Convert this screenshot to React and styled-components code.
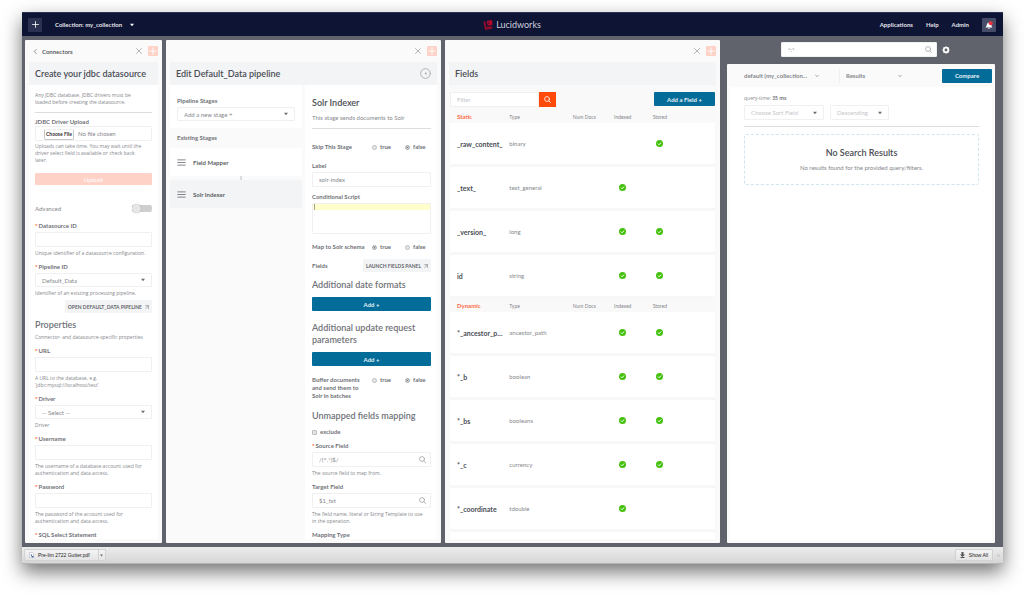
import React, { useId } from "react";
import styled, { createGlobalStyle, css } from "styled-components";

const c = {
  navy: "#0d1434",
  slate: "#60636c",
  panel: "#fafafa",
  band: "#f3f4f6",
  line: "#f0f0f1",
  text: "#5c5f66",
  label: "#707278",
  dark: "#4a4d54",
  mute: "#85878c",
  faint: "#c4c5c8",
  blue: "#036c99",
  orange: "#ff4a0a",
  peach: "#ffd2c7",
  green: "#45c10d",
};

const GlobalStyle = createGlobalStyle`
  *, *::before, *::after { box-sizing: border-box; }
  body { margin: 0; background: #fff; }
  body, button, input, select, textarea {
    font-family: Lato, "Liberation Sans", sans-serif;
    font-size: 6px;
    color: ${c.text};
  }
  button { border: 0; padding: 0; cursor: pointer; }
  h1, h2, h3, p { margin: 0; }
`;

const Page = styled.div`
  height: 100vh;
  padding: 12px 21px 31px 22px;
  display: flex;
`;
const Window = styled.div`
  flex: 1;
  min-width: 0;
  display: flex;
  flex-direction: column;
  background: ${c.slate};
  box-shadow: 0 8px 18px rgba(0, 0, 0, 0.55);
`;

/* Top navigation */
const TopBar = styled.header`
  display: grid;
  grid-template-columns: 1fr auto 1fr;
  align-items: center;
  height: 24px;
  padding: 0 7px 0 6px;
  background: ${c.navy};
  border-top: 1px solid #2b3152;
`;
const TopGroup = styled.div`
  display: flex;
  align-items: center;
  gap: ${(p) => p.$gap}px;
  justify-content: ${(p) => (p.$end ? "flex-end" : "flex-start")};
`;
const SquareButton = styled.button`
  display: grid;
  place-items: center;
  width: 14px;
  height: 14px;
  border-radius: 1px;
  background: ${(p) => (p.$light ? "#474c68" : "#2b3150")};
  color: #fff;
`;
const CollectionButton = styled.button`
  display: flex;
  align-items: center;
  gap: 8px;
  background: none;
  color: #e3e4ea;
  font-weight: 700;
`;
const NavLink = styled.a`
  color: #e3e4ea;
  font-weight: 700;
  text-decoration: none;
`;
const Brand = styled.div`
  display: flex;
  align-items: center;
  gap: 3px;
  color: #cfd1dc;
  font-size: 9px;
`;

/* Work area */
const Workspace = styled.main`
  flex: 1;
  min-height: 0;
  display: grid;
  grid-template-columns: minmax(0, 137fr) minmax(0, 275fr) minmax(0, 275fr) minmax(0, 271fr);
  grid-template-rows: minmax(0, 1fr);
  gap: 4px;
  padding: 4px 8px 4px 3px;
`;
const Panel = styled.section`
  min-width: 0;
  display: flex;
  flex-direction: column;
  padding: 0 4px 4px;
  background: ${c.panel};
  border-radius: 1px;
`;
const PanelTop = styled.div`
  display: flex;
  align-items: center;
  justify-content: flex-end;
  gap: 6px;
  height: 22px;
  flex: none;
`;
const BackButton = styled.button`
  display: flex;
  align-items: center;
  gap: 4px;
  margin-right: auto;
  padding-left: 4px;
  background: none;
  font-weight: 700;
`;
const IconButton = styled.button`
  display: grid;
  place-items: center;
  background: none;
  color: #a2a4a9;
`;
const AddPanelButton = styled(IconButton)`
  width: 10px;
  height: 10px;
  background: ${c.peach};
  border-radius: 1px;
  color: #fff;
`;
const TitleBand = styled.div`
  display: flex;
  align-items: center;
  justify-content: space-between;
  height: 23px;
  flex: none;
  padding: 0 6px;
  background: ${c.band};
`;
const Title = styled.h2`
  font-size: 9px;
  line-height: 12px;
  font-weight: 600;
  color: ${c.dark};
  white-space: nowrap;
`;
const Scroll = styled.div`
  flex: 1;
  min-height: 0;
  min-width: 0;
  overflow: hidden;
  padding: ${(p) => p.$pad || "0"};
  background: ${(p) => p.$bg || "#fff"};
`;
const Columns = styled.div`
  flex: 1;
  min-height: 0;
  display: grid;
  grid-template-columns: 1fr 1fr;
  gap: 3px;
`;

/* Form parts */
const Stack = styled.div`
  display: flex;
  flex-direction: column;
  margin-top: ${(p) => p.$top || 0}px;
`;
const Help = styled.p`
  font-family: "Open Sans", "Liberation Sans", sans-serif;
  font-size: 5px;
  line-height: 7px;
  color: ${c.mute};
`;
const Note = styled.p`
  font-size: 6px;
  line-height: 8px;
  color: ${c.mute};
`;
const Rule = styled.hr`
  width: 100%;
  height: 1px;
  margin: ${(p) => p.$m};
  border: 0;
  background: #dcdde0;
`;
const Label = styled.label`
  display: block;
  font-size: 6px;
  line-height: ${(p) => p.$lh || 10}px;
  font-weight: 700;
  color: ${c.label};
`;
const Star = styled.span`
  color: ${c.orange};
  margin-right: 1px;
`;
const boxed = css`
  width: 100%;
  border: 1px solid ${c.line};
  border-radius: 1px;
  background: #fff;
  color: ${c.mute};
  outline: none;
`;
const TextInput = styled.input`
  ${boxed}
  height: 15px;
  padding: 0 6px;
  margin: 0;
  &::placeholder { color: ${c.faint}; }
`;
const FileInput = styled.input`
  ${boxed}
  height: 15px;
  line-height: 11px;
  padding: 1px 0 1px 8px;
  color: ${c.mute};
  &::file-selector-button {
    height: 11px;
    margin: 0 4px 0 0;
    padding: 0 1px;
    border: 1px solid #c6c7ca;
    border-top-color: #eee;
    border-radius: 2px;
    background: #fff;
    color: #333;
    font-family: inherit;
    font-size: 5px;
    font-weight: 700;
  }
`;
const SelectWrap = styled.div`
  position: relative;
  width: ${(p) => (p.$w ? p.$w + "px" : "100%")};
  svg {
    position: absolute;
    right: ${(p) => p.$arrow || 7}px;
    top: 50%;
    transform: translateY(-50%);
    pointer-events: none;
  }
`;
const NativeSelect = styled.select`
  ${boxed}
  display: block;
  appearance: none;
  height: ${(p) => p.$h || 14}px;
  padding: 0 6px;
  color: ${(p) => (p.$faint ? c.faint : c.mute)};
  ${(p) =>
    p.$plain &&
    css`
      border: 0;
      padding: 0;
      background: none;
      font-weight: 700;
      color: ${c.mute};
    `}
`;
const SearchWrap = styled.div`
  position: relative;
  flex: 1;
  svg {
    position: absolute;
    right: 5px;
    top: 4px;
    color: #a2a4a9;
  }
`;
const WideButton = styled.button`
  height: ${(p) => p.$h || 14}px;
  width: ${(p) => (p.$w ? p.$w + "px" : "100%")};
  flex: none;
  border-radius: 1px;
  background: ${(p) => (p.$soft ? c.peach : c.blue)};
  color: ${(p) => (p.$soft ? "#fff" : "#e6f1f5")};
  font-weight: ${(p) => (p.$soft ? 400 : 700)};
`;
const GrayButton = styled.button`
  display: flex;
  align-items: center;
  gap: 3px;
  height: 13px;
  padding: 0 3px;
  background: ${c.band};
  border-radius: 1px;
  color: #63656b;
  font-size: 5px;
  font-weight: 700;
  text-transform: uppercase;
  white-space: nowrap;
`;
const Row = styled.div`
  display: flex;
  align-items: center;
  justify-content: ${(p) => p.$justify || "space-between"};
  gap: ${(p) => p.$gap || 0}px;
  margin-top: ${(p) => p.$top || 0}px;
`;
const SubTitle = styled.h3`
  font-size: 9px;
  line-height: 12px;
  font-weight: 600;
  color: ${(p) => (p.$dark ? c.dark : c.label)};
  margin-top: ${(p) => p.$top || 0}px;
`;
const Toggle = styled.input`
  appearance: none;
  position: relative;
  width: 20px;
  height: 9px;
  margin: 0;
  background: linear-gradient(#cfcfcf, #cfcfcf) center / 100% 7px no-repeat;
  border-radius: 4px;
  &::before {
    content: "";
    position: absolute;
    left: 0;
    top: 0;
    width: 9px;
    height: 9px;
    border-radius: 50%;
    background: #e6e6e6;
    box-shadow: 0 0 1px rgba(0, 0, 0, 0.4);
  }
`;
const RadioRow = styled.fieldset`
  display: grid;
  grid-template-columns: 60px 33px 1fr;
  align-items: start;
  border: 0;
  padding: 0;
  margin: ${(p) => p.$top}px 0 0;
`;
const RadioName = styled.span`
  font-size: 6px;
  line-height: 8px;
  font-weight: 700;
  color: ${c.label};
`;
const Choice = styled.label`
  display: flex;
  align-items: center;
  gap: 3px;
  line-height: 8px;
  font-weight: 700;
  color: ${c.label};
`;
const Radio = styled.input`
  appearance: none;
  width: 5px;
  height: 5px;
  margin: 0;
  border: 1px solid #bcbdc0;
  border-radius: 50%;
  background: #e6e6e8;
  &:checked {
    background: #4d4f54;
    box-shadow: inset 0 0 0 1px #ddd;
  }
`;
const Check = styled(Radio)`
  border-radius: 1px;
`;
const Script = styled.textarea`
  ${boxed}
  display: block;
  height: 31px;
  padding: 0 1px;
  resize: none;
  background: linear-gradient(#ffffcc, #ffffcc) top / 100% 6px no-repeat #fff;
`;
const ScriptBox = styled.div`
  position: relative;
  &::after {
    content: "";
    position: absolute;
    left: 2px;
    top: 1px;
    width: 1px;
    height: 6px;
    background: #a5a698;
  }
`;

/* Pipeline stages */
const StageForm = styled.div`
  padding: 11px 7px 7px 7px;
  background: #fff;
`;
const StageHeading = styled.h3`
  padding-left: 7px;
  font-size: 6px;
  line-height: 20px;
  font-weight: 700;
  color: ${c.label};
`;
const Stage = styled.button`
  display: flex;
  align-items: center;
  gap: 7px;
  width: 100%;
  height: 28px;
  padding-left: 7px;
  background: ${(p) => (p.$active ? c.band : "#fff")};
  font-weight: 700;
`;
const StageLink = styled.div`
  display: grid;
  place-items: center;
  height: 4px;
  padding-left: 9px;
  color: #a2a4a9;
`;

/* Fields */
const Toolbar = styled.div`
  display: flex;
  justify-content: space-between;
  height: 15px;
`;
const FilterGroup = styled.form`
  display: flex;
  width: 40%;
`;
const SearchButton = styled.button`
  display: grid;
  place-items: center;
  width: 17px;
  flex: none;
  background: ${c.orange};
  color: #fff;
`;
const Table = styled.table`
  width: 100%;
  table-layout: fixed;
  border-collapse: separate;
  border-spacing: 0;
`;
const Th = styled.th`
  height: 13px;
  padding: 0 0 0 ${(p) => (p.$first ? 7 : 1)}px;
  font-size: ${(p) => (p.$first ? 6 : 5)}px;
  line-height: 8px;
  font-weight: ${(p) => (p.$first ? 700 : 400)};
  color: ${(p) => (p.$first ? "#ff6a45" : c.mute)};
  text-align: ${(p) => (p.$center ? "center" : "left")};
`;
const Td = styled.td`
  height: 44px;
  padding: 0 0 0 ${(p) => (p.$name ? 7 : 1)}px;
  border-bottom: 3px solid #f7f7f8;
  background: #fff;
  font-size: ${(p) => (p.$name ? 7 : 6)}px;
  line-height: 8px;
  font-weight: ${(p) => (p.$name ? 700 : 400)};
  color: ${(p) => (p.$name ? c.dark : c.mute)};
  text-align: ${(p) => (p.$center ? "center" : "left")};
  white-space: nowrap;
  svg { display: block; margin: 0 auto; }
`;

/* Search */
const SearchSide = styled.div`
  min-width: 0;
  display: flex;
  flex-direction: column;
  margin-left: 3px;
`;
const QueryBar = styled.form`
  display: flex;
  align-items: center;
  gap: 5px;
  width: 63%;
  margin: 2px 0 7px 54px;
`;
const ResultPanel = styled(Panel)`
  flex: 1;
  padding: 0 3px 3px;
`;
const ResultHead = styled.div`
  display: flex;
  align-items: center;
  justify-content: space-between;
  height: 23px;
  padding-left: 14px;
`;
const Divider = styled.span`
  width: 1px;
  height: 16px;
  margin: 0 6px 0 17px;
  background: ${c.line};
`;
const Empty = styled.div`
  display: flex;
  flex-direction: column;
  align-items: center;
  gap: 5px;
  margin-top: 7px;
  padding: 12px 0;
  border: 1px dashed #cfe6ee;
  border-radius: 2px;
`;

/* Downloads */
const Downloads = styled.footer`
  display: flex;
  align-items: center;
  gap: 4px;
  height: 17px;
  padding: 0 3px 0 2px;
  background: linear-gradient(#ececec, #d6d6d6);
  border-bottom: 1px solid #b4b4b4;
`;
const DownloadItem = styled.button`
  display: flex;
  align-items: center;
  gap: 4px;
  height: 12px;
  padding: 0 ${(p) => (p.$push ? 4 : 2)}px 0 4px;
  border: 1px solid #d2d2d2;
  border-radius: 1px;
  background: linear-gradient(#f4f4f4, #e4e4e4);
  color: #222;
  font-family: "Liberation Sans", sans-serif;
  font-size: 5px;
  margin-left: ${(p) => (p.$push ? "auto" : 0)};
`;
const FileArrow = styled.span`
  display: flex;
  align-items: center;
  height: 10px;
  margin-left: 4px;
  padding-left: 1px;
  border-left: 1px solid #cfcfcf;
`;

const Caret = ({ size = 4, color = "#6a6c72" }) => (
  <svg width={size} height={size} viewBox="0 0 10 10" aria-hidden="true">
    <path d="M0 2h10L5 8z" fill={color} />
  </svg>
);
const Stroke = ({ size, d, w = 1, children }) => (
  <svg width={size} height={size} viewBox="0 0 12 12" fill="none" stroke="currentColor" strokeWidth={w} strokeLinecap="round" aria-hidden="true">
    {d && <path d={d} />}
    {children}
  </svg>
);
const Plus = ({ size = 8, w = 1.4 }) => <Stroke size={size} w={w} d="M6 1v10M1 6h10" />;
const Cross = ({ size = 6 }) => <Stroke size={size} w={1.6} d="M1 1l10 10M11 1L1 11" />;
const Lens = ({ size = 7, w = 1.4 }) => (
  <Stroke size={size} w={w} d="M8.4 8.4L11.3 11.3">
    <circle cx="5.2" cy="5.2" r="4.2" />
  </Stroke>
);
const Launch = () => <Stroke size={4} w={1.6} d="M2 2h9v9M10 3L2 11" />;
const Bars = () => <Stroke size={9} w={1} d="M1 2.5h10M1 6h10M1 9.5h10" />;
const Chevron = () => <Stroke size={4} w={1.6} d="M2 4l4 4 4-4" />;
const Tick = () => (
  <svg width="7" height="7" viewBox="0 0 14 14" role="img" aria-label="yes">
    <circle cx="7" cy="7" r="7" fill={c.green} />
    <path d="M3.8 7.2l2.3 2.3 4.2-4.4" fill="none" stroke="#fff" strokeWidth="2" />
  </svg>
);
const Logo = () => (
  <svg width="10" height="10" viewBox="0 0 30 30" aria-hidden="true">
    <path d="M1 5l6-1 3 17 17-3 1 8-22 4z" fill="#8d0a2b" />
    <path d="M11 3l16-3 2 14-15 3z" fill="#b3082d" />
    <path d="M13 14l7-7" stroke={c.navy} strokeWidth="2" />
  </svg>
);
const Bell = () => (
  <svg width="8" height="8" viewBox="0 0 16 16" aria-hidden="true">
    <path d="M1 13c2-2 2-4 3-7 1-2 3-3 5-3 3 0 4 3 4 6 0 2 1 3 2 4zM6 14h4l-2 2z" fill="#fff" />
    <circle cx="11.5" cy="4.5" r="4" fill="#f0303a" />
  </svg>
);
const Gear = () => (
  <svg width="8" height="8" viewBox="0 0 16 16" aria-hidden="true">
    <circle cx="8" cy="8" r="4.6" fill="none" stroke="#fff" strokeWidth="3.6" />
    <path d="M8 1v14M1 8h14M3 3l10 10M13 3L3 13" stroke="#fff" strokeWidth="2.4" />
    <circle cx="8" cy="8" r="2.8" fill={c.slate} />
  </svg>
);

function Select({ id, label, text, w, h, arrow, faint, plain }) {
  return (
    <SelectWrap $w={w} $arrow={arrow}>
      <NativeSelect id={id} aria-label={label} $h={h} $faint={faint} $plain={plain}>
        <option>{text}</option>
      </NativeSelect>
      {plain ? <Chevron /> : <Caret />}
    </SelectWrap>
  );
}

function Field({ label, required, help, top = 5, select, value, search, type = "text", children }) {
  const id = useId();
  return (
    <Stack $top={top}>
      <Label htmlFor={id}>
        {required && <Star>*</Star>}
        {label}
      </Label>
      <Stack $top={1}>
        {select ? (
          <Select id={id} text={select} />
        ) : search ? (
          <SearchWrap>
            <TextInput id={id} type={type} defaultValue={value} />
            <Lens />
          </SearchWrap>
        ) : (
          <TextInput id={id} type={type} defaultValue={value} />
        )}
      </Stack>
      {help && (
        <Stack $top={3}>
          <Help>{help}</Help>
        </Stack>
      )}
      {children}
    </Stack>
  );
}

function TrueFalse({ label, name, value, top }) {
  const id = useId();
  return (
    <RadioRow $top={top} aria-labelledby={id}>
      <RadioName id={id}>{label}</RadioName>
      {["true", "false"].map((v) => (
        <Choice key={v}>
          <Radio type="radio" name={name} value={v} defaultChecked={v === value} />
          {v}
        </Choice>
      ))}
    </RadioRow>
  );
}

const staticFields = [
  ["_raw_content_", "binary", false, true],
  ["_text_", "text_general", true, false],
  ["_version_", "long", true, true],
  ["id", "string", true, true],
];
const dynamicFields = [
  ["*_ancestor_p...", "ancestor_path", true, true],
  ["*_b", "boolean", true, true],
  ["*_bs", "booleans", true, true],
  ["*_c", "currency", true, true],
  ["*_coordinate", "tdouble", true, false],
  ["", "", false, false],
];

function FieldGroup({ title, rows }) {
  return (
    <tbody>
      <tr>
        <Th $first scope="col">{title}</Th>
        <Th scope="col">Type</Th>
        <Th scope="col" $center>Num Docs</Th>
        <Th scope="col" $center>Indexed</Th>
        <Th scope="col" $center>Stored</Th>
        <Th as="td" />
      </tr>
      {rows.map(([name, type, indexed, stored]) => (
        <tr key={name}>
          <Td $name>{name}</Td>
          <Td>{type}</Td>
          <Td />
          <Td $center>{indexed && <Tick />}</Td>
          <Td $center>{stored && <Tick />}</Td>
          <Td />
        </tr>
      ))}
    </tbody>
  );
}

function PanelControls({ back }) {
  return (
    <PanelTop>
      {back && (
        <BackButton>
          <Stroke size={5} w={1.6} d="M8 1L3 6l5 5" />
          {back}
        </BackButton>
      )}
      <IconButton aria-label="Close panel"><Cross /></IconButton>
      <AddPanelButton aria-label="Add panel"><Plus /></AddPanelButton>
    </PanelTop>
  );
}

function DatasourcePanel() {
  return (
    <Panel>
      <PanelControls back="Connectors" />
      <TitleBand><Title>Create your jdbc datasource</Title></TitleBand>
      <Scroll $pad="7px 6px 0 6px">
        <Help>Any JDBC database. JDBC drivers must be<br />loaded before creating the datasource.</Help>
        <Rule $m="6px 0 5px" />
        <Label htmlFor="driver-file" $lh={8}>JDBC Driver Upload</Label>
        <Stack>
          <FileInput id="driver-file" type="file" />
        </Stack>
        <Stack $top={2}>
          <Help>Uploads can take time. You may wait until the<br />driver select field is available or check back<br />later.</Help>
        </Stack>
        <Stack $top={9}>
          <WideButton $soft $h={12}>Upload</WideButton>
        </Stack>
        <Row $top={19}>
          <Note as="label" htmlFor="advanced">Advanced</Note>
          <Toggle id="advanced" type="checkbox" />
        </Row>
        <Field label="Datasource ID" required top={8} help="Unique identifier of a datasource configuration." />
        <Field label="Pipeline ID" required select="Default_Data" help="Identifier of an existing processing pipeline.">
          <Row $justify="flex-end" $top={3}>
            <GrayButton>Open Default_Data pipeline <Launch /></GrayButton>
          </Row>
        </Field>
        <SubTitle $top={6}>Properties</SubTitle>
        <Stack $top={3}>
          <Help>Connector- and datasource-specific properties</Help>
        </Stack>
        <Field label="URL" required help={<>A URL to the database, e.g.<br />'jdbc:mysql://localhost/test'</>} />
        <Field label="Driver" required select="-- Select --" help="Driver" />
        <Field label="Username" required help="The username of a database account used for authentication and data access." />
        <Field label="Password" required type="password" help="The password of the account used for authentication and data access." />
        <Field label="SQL Select Statement" required />
      </Scroll>
    </Panel>
  );
}

function PipelinePanel() {
  return (
    <Panel>
      <PanelControls />
      <TitleBand>
        <Title>Edit Default_Data pipeline</Title>
        <IconButton aria-label="Collapse">
          <Stroke size={11} w={0.9}>
            <circle cx="6" cy="6" r="5.3" />
            <path d="M7 4.4L5 6l2 1.6z" fill="currentColor" stroke="none" />
          </Stroke>
        </IconButton>
      </TitleBand>
      <Columns>
        <Scroll $bg={c.panel}>
          <StageForm>
            <Label htmlFor="stages">Pipeline Stages</Label>
            <Stack $top={1}><Select id="stages" text="Add a new stage +" /></Stack>
          </StageForm>
          <StageHeading>Existing Stages</StageHeading>
          <Stage><Bars />Field Mapper</Stage>
          <StageLink><Stroke size={4} w={2} d="M6 0v12" /></StageLink>
          <Stage $active><Bars />Solr Indexer</Stage>
        </Scroll>
        <Scroll $pad="12px 6px 0 7px">
          <SubTitle $dark>Solr Indexer</SubTitle>
          <Stack $top={5}><Note>This stage sends documents to Solr</Note></Stack>
          <Rule $m="6px 0 14px" />
          <TrueFalse label="Skip This Stage" name="skip" value="false" top={0} />
          <Field label="Label" top={10} value="solr-index" />
          <Stack $top={5}>
            <Label htmlFor="script">Conditional Script</Label>
            <Stack $top={1}>
              <ScriptBox><Script id="script" /></ScriptBox>
            </Stack>
          </Stack>
          <TrueFalse label="Map to Solr schema" name="map" value="true" top={9} />
          <Row $top={8}>
            <RadioName>Fields</RadioName>
            <GrayButton>Launch Fields Panel <Launch /></GrayButton>
          </Row>
          <SubTitle $top={7}>Additional date formats</SubTitle>
          <Stack $top={6}><WideButton>Add +</WideButton></Stack>
          <SubTitle $top={11}>Additional update request parameters</SubTitle>
          <Stack $top={6}><WideButton>Add +</WideButton></Stack>
          <TrueFalse label={<>Buffer documents<br />and send them to<br />Solr in batches</>} name="buffer" value="false" top={10} />
          <SubTitle $top={10}>Unmapped fields mapping</SubTitle>
          <Row $top={6} $justify="flex-start">
            <Choice><Check type="checkbox" />exclude</Choice>
          </Row>
          <Field label="Source Field" required search value="/(^.*)$/" help="The source field to map from." />
          <Field label="Target Field" search value="$1_txt" help={<>The field name, literal or String Template to use<br />in the operation.</>} />
          <Field label="Mapping Type" />
        </Scroll>
      </Columns>
    </Panel>
  );
}

function FieldsPanel() {
  return (
    <Panel>
      <PanelControls />
      <TitleBand><Title>Fields</Title></TitleBand>
      <Scroll $pad="7px 1px 0" $bg="#f9f9fa">
        <Toolbar>
          <FilterGroup onSubmit={(e) => e.preventDefault()}>
            <TextInput placeholder="Filter" aria-label="Filter" />
            <SearchButton aria-label="Search"><Lens /></SearchButton>
          </FilterGroup>
          <WideButton $w={61}>Add a Field +</WideButton>
        </Toolbar>
        <Stack $top={3}>
          <Table>
            <colgroup>
              <col width="22%" />
              <col width="21%" />
              <col width="15%" />
              <col width="14%" />
              <col width="14%" />
              <col />
            </colgroup>
            <FieldGroup title="Static" rows={staticFields} />
            <FieldGroup title="Dynamic" rows={dynamicFields} />
          </Table>
        </Stack>
      </Scroll>
    </Panel>
  );
}

function SearchPanel() {
  return (
    <SearchSide>
      <QueryBar onSubmit={(e) => e.preventDefault()}>
        <SearchWrap>
          <TextInput defaultValue="*:*" aria-label="Query" />
          <Lens />
        </SearchWrap>
        <IconButton aria-label="Settings"><Gear /></IconButton>
      </QueryBar>
      <ResultPanel>
        <ResultHead>
          <Row>
            <Select plain label="Query profile" text="default (my_collection..." w={78} arrow={3} />
            <Divider />
            <Select plain label="View" text="Results" w={60} arrow={4} />
          </Row>
          <WideButton $w={50}>Compare</WideButton>
        </ResultHead>
        <Scroll $pad="8px 13px 0 14px">
          <Help>query-time: <b>35 ms</b></Help>
          <Row $justify="flex-start" $gap={6} $top={3}>
            <Select label="Sort field" text="Choose Sort Field" w={80} h={15} faint />
            <Select label="Sort order" text="Descending" w={59} h={15} faint />
          </Row>
          <Rule $m="6px 0 0" />
          <Empty>
            <SubTitle $dark>No Search Results</SubTitle>
            <Note>No results found for the provided query/filters.</Note>
          </Empty>
        </Scroll>
      </ResultPanel>
    </SearchSide>
  );
}

export default function App() {
  return (
    <>
      <GlobalStyle />
      <Page>
        <Window>
          <TopBar>
            <TopGroup $gap={13}>
              <SquareButton aria-label="New"><Plus size={7} /></SquareButton>
              <CollectionButton>Collection: my_collection <Caret color="#fff" /></CollectionButton>
            </TopGroup>
            <Brand><Logo />Lucidworks</Brand>
            <TopGroup $gap={13} $end>
              <NavLink href="#applications">Applications</NavLink>
              <NavLink href="#help">Help</NavLink>
              <NavLink href="#admin">Admin</NavLink>
              <SquareButton $light aria-label="Notifications"><Bell /></SquareButton>
            </TopGroup>
          </TopBar>
          <Workspace>
            <DatasourcePanel />
            <PipelinePanel />
            <FieldsPanel />
            <SearchPanel />
          </Workspace>
          <Downloads>
            <DownloadItem>
              <svg width="5" height="6" viewBox="0 0 10 12" aria-hidden="true">
                <path d="M1 1h6l2 2v8H1z" fill="#fff" stroke="#aab" />
                <path d="M3 5h3v3h3v3H6z" fill="#4a6fa8" />
              </svg>
              Pre-lim 2722 Gutter.pdf
              <FileArrow><Caret size={3} /></FileArrow>
            </DownloadItem>
            <DownloadItem $push>
              <svg width="5" height="6" viewBox="0 0 10 12" aria-hidden="true">
                <path d="M3 0h4v5h3l-5 5-5-5h3zM1 10h8v2H1z" fill="#555" />
              </svg>
              Show All
            </DownloadItem>
            <IconButton aria-label="Close downloads"><Cross size={3} /></IconButton>
          </Downloads>
        </Window>
      </Page>
    </>
  );
}
